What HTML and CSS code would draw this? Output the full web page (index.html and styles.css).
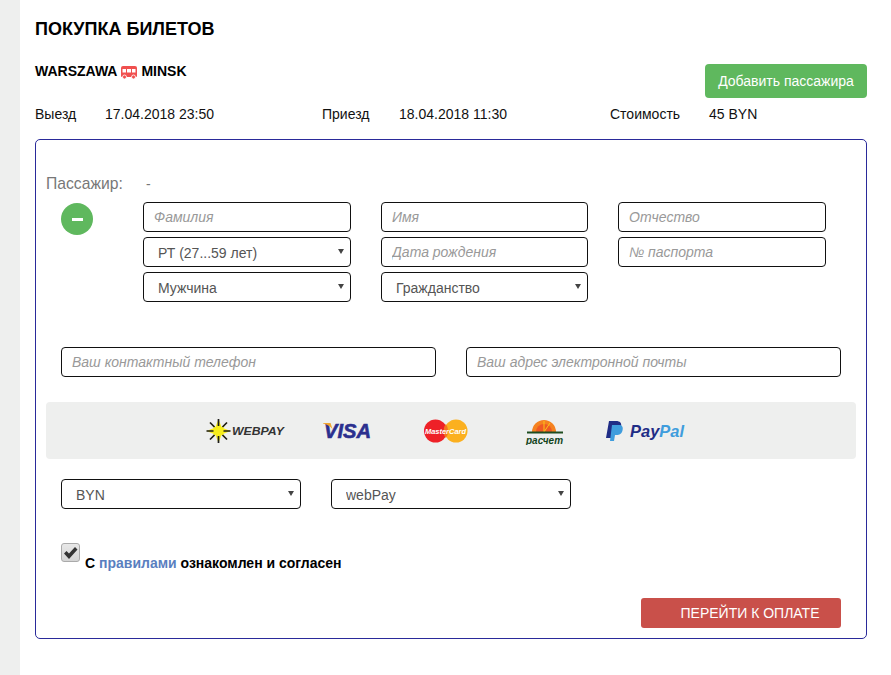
FILE: index.html
```html
<!DOCTYPE html>
<html lang="ru">
<head>
<meta charset="utf-8">
<title>Покупка билетов</title>
<link rel="stylesheet" href="styles.css">
</head>
<body>
<div class="page">
  <aside class="rail"></aside>
  <main class="main">
    <div class="head">
      <div>
        <h1 class="title">ПОКУПКА БИЛЕТОВ</h1>
        <div class="route">
          <span>WARSZAWA</span>
          <svg class="bus" viewBox="0 0 16 13" width="16" height="13"><path d="M2 0h12a2 2 0 0 1 2 2v8a1 1 0 0 1-1 1H1a1 1 0 0 1-1-1V2a2 2 0 0 1 2-2z" fill="#f0504f"/><path d="M1.500 3h3.500v3.500H1.500zM6 3h4v3.500H6zM11 3h3.500v3.500H11z" fill="#fff"/><circle cx="3.500" cy="11" r="2" fill="#f0504f" stroke="#fff" stroke-width=".8"/><circle cx="12.500" cy="11" r="2" fill="#f0504f" stroke="#fff" stroke-width=".8"/></svg>
          <span>MINSK</span>
        </div>
      </div>
      <button class="add-btn" type="button">Добавить пассажира</button>
    </div>

    <div class="info">
      <span>Выезд</span><span>17.04.2018 23:50</span>
      <span>Приезд</span><span>18.04.2018 11:30</span>
      <span>Стоимость</span><span>45 BYN</span>
    </div>

    <form class="box">
      <div class="passenger-label"><span class="pl-name">Пассажир:</span><span>-</span></div>
      <div class="passenger">
        <div class="minus"><span class="minus-bar"></span></div>
        <div class="fields">
          <input class="field" placeholder="Фамилия">
          <input class="field" placeholder="Имя">
          <input class="field" placeholder="Отчество">
          <div class="sel"><select><option>РТ (27...59 лет)</option></select></div>
          <input class="field" placeholder="Дата рождения">
          <input class="field" placeholder="№ паспорта">
          <div class="sel"><select><option>Мужчина</option></select></div>
          <div class="sel"><select><option>Гражданство</option></select></div>
        </div>
      </div>

      <div class="contacts">
        <input class="field" placeholder="Ваш контактный телефон">
        <input class="field" placeholder="Ваш адрес электронной почты">
      </div>

      <div class="payments">
        <svg class="logo logo-webpay" width="80" height="26" viewBox="0 0 80 26">
          <g transform="translate(12.500 13)">
            <path d="M0-12 3-4 9-9 4.500-3 12 0 4.500 3 9 9 3 4 0 12-3 4-9 9-4.500 3-12 0-4.500-3-9-9-3-4z" fill="#f7ee1a"/>
            <circle r="4.500" fill="#f7ee1a"/>
            <g stroke="#1d1d1b" stroke-width="1.700" fill="#1d1d1b">
              <path d="M0-12V-5M0 12V5M-12 0H-5M12 0H5M-8.500-8.500-4-4M8.500 8.500 4 4M-8.500 8.500-4 4M8.500-8.500 4-4"/>
            </g>
          </g>
          <text class="t-webpay" x="26" y="17" textLength="52" lengthAdjust="spacingAndGlyphs">WEBPAY</text>
        </svg>
        <svg class="logo logo-visa" width="52" height="22" viewBox="0 0 52 22">
          <text class="t-visa" x="2" y="18" textLength="47" lengthAdjust="spacingAndGlyphs">VISA</text>
          <path d="M1 3h7.500l2 6C8 6 5 4.500 1 3.500z" fill="#f2a530"/>
        </svg>
        <svg class="logo logo-mc" width="44" height="24" viewBox="0 0 44 24">
          <circle cx="11.500" cy="12" r="11.500" fill="#ee2127"/>
          <circle cx="32" cy="12" r="11.500" fill="#fbb01f"/>
          <path d="M21.800 5a11.500 11.500 0 0 1 0 14 11.500 11.500 0 0 1 0-14z" fill="#f5741f"/>
          <text class="t-mc" x="1" y="15" textLength="41" lengthAdjust="spacingAndGlyphs">MasterCard</text>
        </svg>
        <svg class="logo logo-raschet" width="40" height="26" viewBox="0 0 40 26">
          <path d="M7 13a12 12 0 0 1 24 0z" fill="#f58220"/>
          <path d="M11 13a8 8 0 0 1 16 0z" fill="#ee5a24"/>
          <path d="M19 2v11M25 4l-6 9" stroke="#fcc419" stroke-width="1"/>
          <path d="M2 13.500h36" stroke="#1e4d20" stroke-width="2"/>
          <text class="t-raschet" x="1" y="24.500" textLength="37" lengthAdjust="spacingAndGlyphs">расчет</text>
        </svg>
        <svg class="logo logo-paypal" width="80" height="22" viewBox="0 0 80 22">
          <path d="M4 1h7c4 0 6 2 5 6-1 3.500-3 5-6.500 5H7l-1 6H1z" fill="#1f2d86"/>
          <path d="M7 5h7c3 0 4.500 2 3.500 5.500C16.500 14 14.500 15 11.500 15H10l-1 6H5z" fill="#3f9ddd"/>
          <text class="t-pay" x="25" y="17" textLength="54" lengthAdjust="spacingAndGlyphs">Pay<tspan class="t-pal">Pal</tspan></text>
        </svg>
      </div>

      <div class="pay-selects">
        <div class="sel"><select><option>BYN</option></select></div>
        <div class="sel"><select><option>webPay</option></select></div>
      </div>

      <div class="agree">
        <span class="check"><svg width="15" height="14" viewBox="0 0 15 14"><path d="M1 7.500 3.500 5l2.500 2.500L12 1l2.500 2.500L6 13z" fill="#333"/></svg></span>
        <span class="agree-text">С <a class="rules" href="#">правилами</a> ознакомлен и согласен</span>
      </div>

      <div class="submit-row">
        <button class="pay-btn" type="button">ПЕРЕЙТИ К ОПЛАТЕ</button>
      </div>
    </form>
  </main>
</div>
</body>
</html>
```
FILE: styles.css
```css
* { box-sizing: border-box; }
html, body { margin: 0; height: 100%; background: #fff; }
body { font-family: "Liberation Sans", Arial, sans-serif; font-size: 14px; color: #111; overflow: hidden; }
.page { display: flex; min-height: 675px; }
.rail { width: 20px; flex: none; background: #eeefee; }
.main { flex: 1; padding: 0 24px 0 15px; }

.head { display: flex; justify-content: space-between; align-items: flex-end; height: 98px; }
.title { margin: 0; padding-top: 17px; font-size: 18px; line-height: 21px; font-weight: bold; color: #000; }
.route { display: flex; align-items: center; gap: 4px; margin-top: 23px; margin-bottom: 19px; font-size: 14px; line-height: 16px; font-weight: bold; color: #000; }
.bus { display: block; margin-top: 3px; }
.add-btn { width: 162px; height: 34px; border: 0; border-radius: 4px; background: #5fb85e; color: #fff; font: 14px "Liberation Sans", Arial, sans-serif; padding: 0; }

.info { display: grid; grid-template-columns: 70px 217px 77px 211px 99px auto; margin-top: 8px; line-height: 16px; color: #111; }

.box { margin-top: 17px; height: 500px; border: 1px solid #2a2a9a; border-radius: 5px; padding: 34px 10px 0; }
.passenger-label { display: flex; font-size: 14px; line-height: 20px; color: #777; }
.pl-name { width: 100px; font-size: 15.700px; }

.passenger { display: flex; margin-top: 8px; padding-left: 15px; }
.minus { flex: none; width: 32px; height: 32px; margin-top: 1px; margin-right: 50px; border-radius: 50%; background: #5fb85e; display: flex; align-items: center; justify-content: center; }
.minus-bar { width: 11px; height: 3px; background: #fff; }
.fields { display: grid; grid-template-columns: 208px 207px 208px; column-gap: 30px; row-gap: 5px; }

.field { height: 30px; width: 100%; border: 1px solid #111; border-radius: 4px; padding: 0 10px; font: 14px "Liberation Sans", Arial, sans-serif; color: #555; background: #fff; outline: 0; }
.field::placeholder { color: #999; font-style: italic; opacity: 1; }

.sel { position: relative; height: 30px; }
.sel select { width: 100%; height: 30px; appearance: none; -webkit-appearance: none; border: 1px solid #111; border-radius: 4px; padding: 2px 24px 0 14px; font: 14px "Liberation Sans", Arial, sans-serif; color: #555; background: #fff; outline: 0; }
.sel::after { content: ""; position: absolute; right: 7px; top: 12px; border-left: 3px solid transparent; border-right: 3px solid transparent; border-top: 5px solid #444; }

.contacts { display: grid; grid-template-columns: 375px 375px; column-gap: 30px; margin-top: 45px; padding-left: 15px; }

.payments { display: flex; align-items: center; height: 57px; margin-top: 25px; background: #eeefee; border-radius: 4px; padding-left: 160px; }
.logo { display: block; flex: none; }
.logo-visa { margin-left: 36px; }
.logo-mc { margin-left: 50px; }
.logo-raschet { margin-left: 57px; margin-top: 2px; }
.logo-paypal { margin-left: 40px; }
.t-webpay { font: italic bold 10px "Liberation Sans", Arial, sans-serif; fill: #333; }
.t-visa { font: italic bold 21px "Liberation Sans", Arial, sans-serif; fill: #2b2f8e; stroke: #2b2f8e; stroke-width: .6px; }
.t-mc { font: italic bold 8px "Liberation Sans", Arial, sans-serif; fill: #fff; }
.t-raschet { font: italic bold 10.500px "Liberation Sans", Arial, sans-serif; fill: #14451c; }
.t-pay { font: italic bold 17px "Liberation Sans", Arial, sans-serif; fill: #1f2d86; }
.t-pal { fill: #3f9ddd; }

.pay-selects { display: grid; grid-template-columns: 240px 240px; column-gap: 30px; margin-top: 20px; padding-left: 15px; }

.agree { display: flex; align-items: flex-start; margin-top: 34px; padding-left: 15px; }
.check { flex: none; width: 19px; height: 19px; border: 1px solid #aaa; border-radius: 3px; background: linear-gradient(#e8e8e8, #d4d4d4); display: flex; align-items: center; justify-content: center; }
.agree-text { margin-left: 5px; margin-top: 12px; font-weight: bold; line-height: 17px; color: #000; }
.rules { color: #5a7fc0; text-decoration: none; }

.submit-row { display: flex; justify-content: flex-end; margin-top: 26px; padding-right: 15px; }
.pay-btn { width: 200px; height: 30px; border: 0; border-radius: 3px; background: #c9504a; color: #fff; font: 14px "Liberation Sans", Arial, sans-serif; padding: 0 0 0 18px; text-align: center; }
```
